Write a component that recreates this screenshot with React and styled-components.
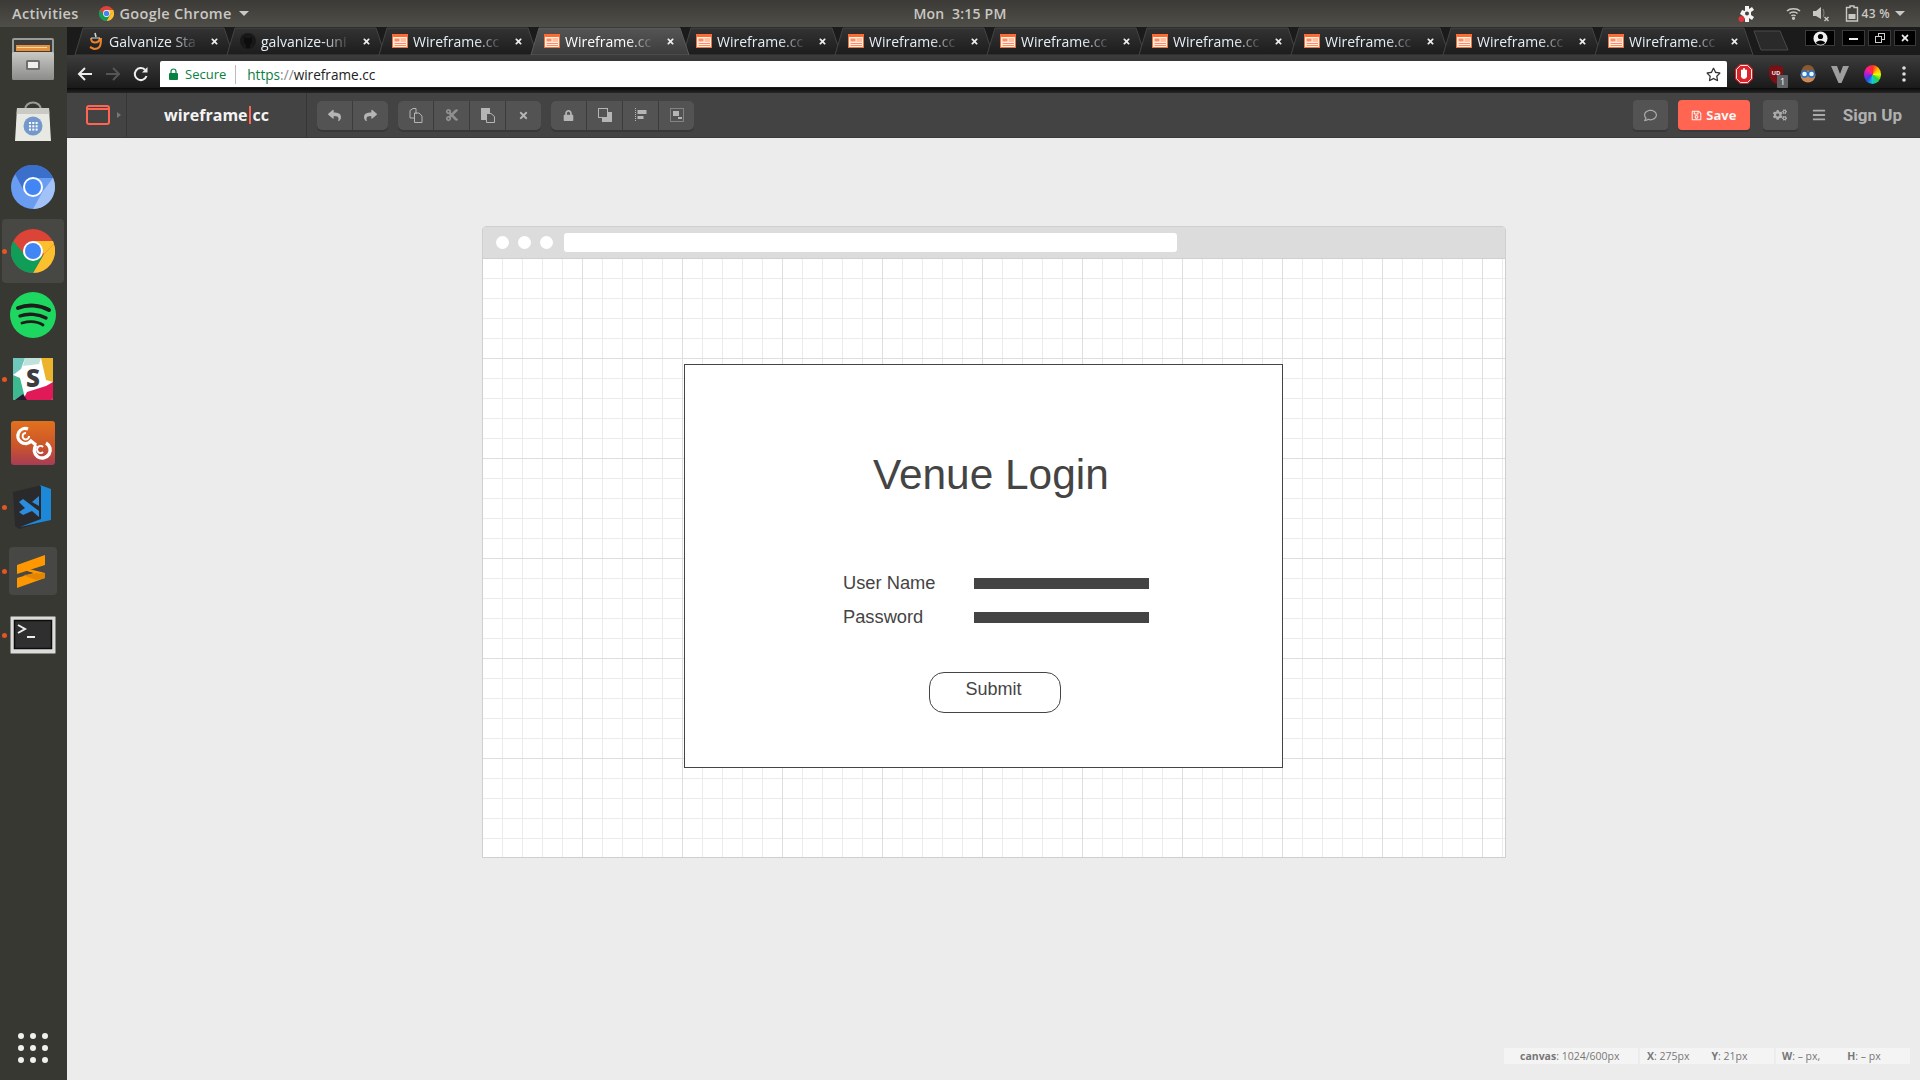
import React from 'react';
import styled, { createGlobalStyle } from 'styled-components';
import { FaReply, FaShare, FaTimes, FaLock, FaRegComment, FaCogs, FaBars, FaRegSave, FaRegStar, FaCut } from 'react-icons/fa';

const GlobalStyle = createGlobalStyle`
  html, body { margin: 0; padding: 0; height: 100%; overflow: hidden; background: #ececec; }
  #root { height: 1080px; }
  * { box-sizing: border-box; }
`;

const Screen = styled.div`
  width: 1920px;
  height: 1080px;
  display: flex;
  flex-direction: column;
  font-family: 'Open Sans', 'Liberation Sans', sans-serif;
  overflow: hidden;
`;

/* gnome top bar */
const TopBar = styled.div`
  height: 27px;
  flex: none;
  display: grid;
  grid-template-columns: 1fr auto 1fr;
  align-items: center;
  background: linear-gradient(#3c3a36, #504e48);
  color: #c9c8c4;
  font-size: 14.5px;
  font-weight: 600;
  letter-spacing: 0.3px;
`;
const TopLeft = styled.div`
  display: flex;
  align-items: center;
  padding-left: 12px;
`;
const AppMenu = styled.div`
  display: flex;
  align-items: center;
  gap: 6px;
  margin-left: 20px;
`;
const Clock = styled.div`
  font-size: 14px;
  letter-spacing: 0.2px;
`;
const Caret = styled.span`
  width: 0;
  height: 0;
  border-left: 5px solid transparent;
  border-right: 5px solid transparent;
  border-top: 5px solid #c9c8c4;
  margin-left: 1px;
`;
const Tray = styled.div`
  display: flex;
  align-items: center;
  justify-content: flex-end;
  padding-right: 15px;
  font-size: 12px;
`;
const TrayItem = styled.div`
  display: flex;
  align-items: center;
  margin-left: ${p => p.$gap}px;
  gap: ${p => p.$inner || 0}px;
`;

const Body = styled.div`
  flex: 1;
  display: flex;
  min-height: 0;
`;

/* launcher */
const Dock = styled.div`
  width: 67px;
  flex: none;
  background: #383833;
  display: flex;
  flex-direction: column;
  align-items: center;
`;
const DockSlot = styled.div`
  position: relative;
  width: 62px;
  height: 64px;
  margin-right: 1px;
  display: flex;
  align-items: center;
  justify-content: center;
  flex: none;
  border-radius: 4px;
  background: ${p => (p.$active ? '#474743' : 'transparent')};
`;
const RunDot = styled.span`
  position: absolute;
  left: 0;
  top: 30px;
  width: 5px;
  height: 5px;
  border-radius: 50%;
  background: #e95420;
`;
const AppGrid = styled.div`
  margin-top: auto;
  margin-bottom: 17px;
  margin-right: 1px;
  display: grid;
  grid-template-columns: repeat(3, 6px);
  gap: 6px;
  span {
    width: 6px;
    height: 6px;
    border-radius: 50%;
    background: #f0f0ee;
  }
`;

const Main = styled.div`
  flex: 1;
  display: flex;
  flex-direction: column;
  min-width: 0;
`;

/* chrome tabs */
const TabStrip = styled.div`
  height: 28px;
  flex: none;
  display: flex;
  align-items: stretch;
  padding-left: 1px;
  background: #1b1b1b;
  position: relative;
`;
const Tab = styled.div`
  position: relative;
  width: 152px;
  flex: none;
  display: flex;
  align-items: center;
  padding-left: 20px;
  color: ${p => (p.$active ? '#fff' : '#e6eef5')};
  font-size: 14px;
  z-index: ${p => (p.$active ? 2 : 1)};
`;
const TabShape = styled.svg`
  position: absolute;
  left: 0;
  top: 0;
  width: 166px;
  height: 28px;
  z-index: -1;
`;
const TabTitle = styled.span`
  width: 90px;
  margin-left: 5px;
  white-space: nowrap;
  -webkit-mask-image: linear-gradient(to right, #000 62px, transparent 90px);
  mask-image: linear-gradient(to right, #000 62px, transparent 90px);
`;
const TabClose = styled(FaTimes)`
  color: #eee;
  width: 9px;
  height: 9px;
  margin-left: 11px;
  flex: none;
`;
const NewTab = styled.svg`
  width: 36px;
  height: 24px;
  margin-left: 13px;
  margin-top: 2px;
  flex: none;
`;
const WindowButtons = styled.div`
  margin-left: auto;
  display: flex;
  align-items: flex-start;
  gap: 3px;
  padding: 3px 4px 0 0;
`;
const WinButton = styled.div`
  width: ${p => p.$w}px;
  height: 16px;
  margin-right: ${p => p.$after || 0}px;
  background: #000;
  border: 1px solid #3a3a3a;
  display: flex;
  align-items: center;
  justify-content: center;
`;

const ChromeBar = styled.div`
  height: 33px;
  flex: none;
  display: flex;
  align-items: center;
  background: linear-gradient(#3c3c3c, #1a1a1a);
  padding-top: 5px;
`;
const NavIcons = styled.div`
  width: 93px;
  flex: none;
  display: flex;
  align-items: center;
  padding-left: 10px;
  gap: 12px;
`;
const UrlBar = styled.div`
  width: 1567px;
  height: 26px;
  flex: none;
  background: #fff;
  border-radius: 2px 2px 0 0;
  display: flex;
  align-items: center;
  padding-left: 9px;
  font-size: 13.6px;
  color: #222;
`;
const Secure = styled.span`
  color: #0b8043;
  margin-left: 7px;
  padding-right: 9px;
  border-right: 1px solid #bbb;
  line-height: 19px;
  font-size: 13px;
`;
const UrlText = styled.span`
  margin-left: 11px;
  flex: 1;
  span { color: #0b8043; }
  i { font-style: normal; color: #888; }
`;
const StarIcon = styled(FaRegStar)`
  width: 15px;
  height: 15px;
  color: #333;
  margin-right: 6px;
`;
const ExtIcons = styled.div`
  flex: 1;
  display: flex;
  align-items: center;
  padding-left: 1px;
`;
const ExtSlot = styled.div`
  position: relative;
  width: 32px;
  display: flex;
  justify-content: center;
`;
const ExtBadge = styled.span`
  position: absolute;
  right: 4px;
  top: 10px;
  width: 11px;
  height: 13px;
  border-radius: 1px;
  background: #5f6368;
  color: #fff;
  font-size: 9px;
  line-height: 13px;
  text-align: center;
`;
const ColorWheel = styled.span`
  width: 17px;
  height: 19px;
  border-radius: 50%;
  background: conic-gradient(#ff2a2a, #ffb300, #e6ff00, #27d13c, #12c9d6, #2b48e8, #a31fd6, #ff1f8f, #ff2a2a);
`;
const Gap = styled.div`
  height: 5px;
  flex: none;
  background: linear-gradient(#0a0a0a, #262626);
`;

/* wireframe.cc toolbar */
const AppBar = styled.div`
  height: 45px;
  flex: none;
  display: flex;
  align-items: center;
  background: #434343;
  border-bottom: 1px solid #3a3a3a;
`;
const LogoCell = styled.div`
  width: 60px;
  height: 100%;
  flex: none;
  display: flex;
  align-items: center;
  padding-left: 19px;
  border-right: 1px solid #363636;
`;
const BrandCell = styled.div`
  width: 180px;
  height: 100%;
  flex: none;
  display: flex;
  align-items: center;
  justify-content: center;
  border-right: 1px solid #363636;
  color: #f4f4f4;
  font-size: 16px;
  font-weight: 700;
  span {
    border-left: 2px solid #ff6550;
    margin-left: 1px;
    padding-left: 2px;
    line-height: 18px;
  }
`;
const Group = styled.div`
  display: flex;
  width: ${p => p.$w}px;
  margin-left: 10px;
  height: 29px;
  border-radius: 5px;
  background: #535353;
  box-shadow: 0 2px 0 #383838;
  overflow: hidden;
`;
const ToolButton = styled.div`
  flex: 1;
  display: flex;
  align-items: center;
  justify-content: center;
  color: #b5b5b5;
  &:not(:last-child) { border-right: 1px solid #3c3c3c; }
  svg { display: block; }
`;
const RightTools = styled.div`
  margin-left: auto;
  display: flex;
  align-items: center;
`;
const SquareButton = styled.div`
  width: 35px;
  height: 30px;
  border-radius: 4px;
  background: #535353;
  box-shadow: 0 2px 0 #383838;
  color: #aaa;
  display: flex;
  align-items: center;
  justify-content: center;
`;
const SaveButton = styled.div`
  width: 72px;
  height: 30px;
  margin: 0 13px 0 10px;
  border-radius: 4px;
  background: #ff6550;
  box-shadow: 0 2px 0 #3a3a3a;
  color: #f6f6f6;
  font-size: 13px;
  font-weight: 700;
  display: flex;
  align-items: center;
  justify-content: center;
  gap: 4px;
`;
const SignUp = styled.div`
  margin: 0 18px 0 17px;
  color: #b0b0b0;
  font-family: Roboto, 'Open Sans', sans-serif;
  font-size: 17px;
  font-weight: 700;
`;
const Hamburger = styled(FaBars)`
  width: 14px;
  height: 14px;
  color: #aaa;
  margin-left: 14px;
`;

/* drawing area */
const Workspace = styled.div`
  flex: 1;
  display: flex;
  flex-direction: column;
  padding-top: 88px;
  background: #ececec;
  min-height: 0;
`;
const BrowserFrame = styled.div`
  width: 1024px;
  height: 632px;
  margin-left: 415px;
  flex: none;
  border: 1px solid #cfcfcf;
  border-radius: 4px 4px 0 0;
  display: flex;
  flex-direction: column;
  background: #fff;
`;
const FrameBar = styled.div`
  height: 32px;
  flex: none;
  display: flex;
  align-items: center;
  gap: 9px;
  padding-left: 13px;
  background: #dcdcdc;
  border-bottom: 1px solid #cfcfcf;
`;
const FrameDot = styled.span`
  width: 13px;
  height: 13px;
  border-radius: 50%;
  background: #fff;
`;
const FrameUrl = styled.span`
  width: 613px;
  height: 19px;
  margin-left: 2px;
  border-radius: 3px;
  background: #fff;
`;
const Canvas = styled.div`
  position: relative;
  flex: 1;
  background-color: #fff;
  background-image:
    linear-gradient(to right, #dedede 1px, transparent 1px),
    linear-gradient(to bottom, #dedede 1px, transparent 1px),
    linear-gradient(to right, #ebebeb 1px, transparent 1px),
    linear-gradient(to bottom, #ebebeb 1px, transparent 1px);
  background-size: 100px 100px, 100px 100px, 20px 20px, 20px 20px;
  background-position: 99px 99px, 99px 99px, 19px 19px, 19px 19px;
`;
const LoginBox = styled.div`
  position: absolute;
  left: 201px;
  top: 105px;
  width: 599px;
  height: 404px;
  background: #fff;
  border: 1px solid #444;
`;
const Shape = styled.div`
  position: absolute;
  left: ${p => p.$x}px;
  top: ${p => p.$y}px;
  color: #444;
  font-family: 'Liberation Sans', Arial, sans-serif;
  white-space: nowrap;
`;
const Heading = styled(Shape)`
  font-size: 42.4px;
  line-height: 48px;
`;
const FieldLabel = styled(Shape)`
  font-size: 18.3px;
  line-height: 22px;
`;
const FieldBar = styled(Shape)`
  width: 175px;
  height: 11px;
  background: #444;
`;
const SubmitButton = styled(Shape)`
  width: 132px;
  height: 41px;
  border: 1px solid #444;
  border-radius: 15px;
  background: #fff;
  font-size: 18px;
  line-height: 32px;
  text-align: center;
  padding-right: 3px;
`;

const StatusBar = styled.div`
  margin-top: auto;
  margin-bottom: 16px;
  align-self: flex-end;
  margin-right: 10px;
  display: flex;
  gap: 2px;
  font-size: 10.5px;
  color: #777;
  b { font-weight: 700; }
`;
const StatusCell = styled.div`
  width: ${p => p.$w}px;
  height: 16px;
  background: #f4f4f4;
  display: flex;
  align-items: center;
  padding-left: ${p => p.$pad}px;
  span { white-space: nowrap; }
  span + span { margin-left: ${p => p.$gap}px; }
`;

const ChromeLogo = ({ size = 44 }) => (
  <svg width={size} height={size} viewBox="0 0 44 44">
    <circle cx="22" cy="22" r="22" fill="#db4437" />
    <path d="M22 44 L33 25 L43 15 A22 22 0 0 1 22 44Z" fill="#fbc02d" />
    <path d="M2.2 12 A22 22 0 0 0 22 44 L32 26.5 L14 26Z" fill="#0f9d58" />
    <path d="M22 12 H42 A22 22 0 0 1 43 15 L33 25 Z" fill="#fbc02d" />
    <circle cx="22" cy="22" r="10" fill="#fff" />
    <circle cx="22" cy="22" r="8" fill="#4285f4" />
  </svg>
);

const ChromiumLogo = () => (
  <svg width="44" height="44" viewBox="0 0 44 44">
    <circle cx="22" cy="22" r="22" fill="#699df2" />
    <path d="M4 9 A22 22 0 0 1 42 13 L22 13 L12 24Z" fill="#3a6fcc" />
    <path d="M42 13 A22 22 0 0 1 22 44 L32 26Z" fill="#a3c2f7" />
    <circle cx="22" cy="22" r="10" fill="#fff" />
    <circle cx="22" cy="22" r="8" fill="#4285f4" />
  </svg>
);

const CabinetIcon = () => (
  <svg width="44" height="44" viewBox="0 0 44 44">
    <defs>
      <linearGradient id="cabinetBody" x1="0" y1="0" x2="0" y2="1">
        <stop offset="0" stopColor="#c8c8c5" />
        <stop offset="1" stopColor="#8c8c8a" />
      </linearGradient>
    </defs>
    <rect x="1" y="1" width="42" height="42" rx="2" fill="#9a9a97" />
    <rect x="3" y="3" width="38" height="12" fill="#3c3c3a" />
    <rect x="5" y="8" width="34" height="6" fill="#e8903c" />
    <rect x="6" y="10" width="30" height="1" fill="#f5d9a8" />
    <rect x="1" y="15" width="42" height="28" rx="2" fill="url(#cabinetBody)" />
    <rect x="15" y="23" width="14" height="10" rx="1.5" fill="#6e6e6c" />
    <rect x="17" y="25" width="10" height="6" fill="#eee" />
  </svg>
);

const StoreIcon = () => (
  <svg width="44" height="44" viewBox="0 0 44 44">
    <path d="M14 9 C14 -1 30 -1 30 9" fill="none" stroke="#9a9a96" strokeWidth="2" />
    <path d="M6 7 H38 L40 40 H4Z" fill="#e8e9e3" />
    <path d="M6 7 H38 L38.4 13 H5.6Z" fill="#c9cac4" />
    <circle cx="22" cy="25" r="9.5" fill="#7398cc" />
    <g fill="#fff">
      {[18, 21.3, 24.6].map(x => [21, 24.3, 27.6].map(y => <rect key={`${x}${y}`} x={x} y={y} width="2" height="2" />))}
    </g>
  </svg>
);

const SpotifyIcon = () => (
  <svg width="46" height="46" viewBox="0 0 46 46">
    <circle cx="23" cy="23" r="23" fill="#1ed760" />
    <g fill="none" stroke="#1d1d1b" strokeLinecap="round">
      <path d="M8 16 C18 12 30 13 39 18" strokeWidth="4" />
      <path d="M10 24 C18 21 29 22 36 26" strokeWidth="3.4" />
      <path d="M12 31 C19 29 27 29 33 33" strokeWidth="2.8" />
    </g>
  </svg>
);

const SlackIcon = () => (
  <svg width="40" height="42" viewBox="0 0 40 42">
    <rect width="40" height="42" rx="2" fill="#fff" />
    <path d="M0 0 H12 L8 11 L0 17Z" fill="#6fc8bb" />
    <path d="M12 0 H28 L26 6 L10 8Z" fill="#bfe3da" />
    <path d="M28 0 H40 V24 L33 22Z" fill="#ecb32d" />
    <path d="M0 17 L7 20 L12 40 V42 H2 Q0 42 0 40Z" fill="#3eb890" />
    <path d="M10 42 L14 34 L33 28 L40 24 V40 Q40 42 38 42Z" fill="#e01a59" />
    <path d="M2 42 L10 36 L14 42Z" fill="#2a1a2e" />
    <text x="20" y="29" textAnchor="middle" fontFamily="Open Sans, sans-serif" fontWeight="800" fontSize="24" fill="#3d3d3f">S</text>
  </svg>
);

const LoopIcon = () => (
  <svg width="46" height="46" viewBox="0 0 46 46">
    <defs>
      <linearGradient id="loopBg" x1="0" y1="0" x2="0" y2="1">
        <stop offset="0" stopColor="#e2711d" />
        <stop offset="0.6" stopColor="#c9532c" />
        <stop offset="1" stopColor="#a83c56" />
      </linearGradient>
    </defs>
    <rect x="1" y="1" width="44" height="44" rx="3" fill="url(#loopBg)" />
    <g fill="none" stroke="#fff">
      <path d="M18 9 A7.5 7.5 0 1 0 21 21 L26 25" strokeWidth="3.4" />
      <path d="M16 13 A3.2 3.2 0 1 0 19 16" strokeWidth="2" />
      <path d="M26 25 A8 8 0 1 0 36 23" strokeWidth="3.4" />
      <path d="M33 27 A3.5 3.5 0 1 0 33 32" strokeWidth="2" />
    </g>
  </svg>
);

const CodeIcon = () => (
  <svg width="42" height="46" viewBox="0 0 42 46">
    <path d="M1 8 L30 1 L38 6 V36 L7 45 L3 42Z" fill="#2a2a2c" />
    <path d="M28 1 L39 5 V36 L8 43 L29 35 V3Z" fill="#1e88d8" />
    <path d="M7 18 L11 15 L27 27 V33 L20 27 L11 31 L7 28 L13 24Z M27 12 V22 L20 18Z" fill="#2a8ddf" />
  </svg>
);

const SublimeIcon = () => (
  <svg width="48" height="48" viewBox="0 0 48 48">
    <rect width="48" height="48" rx="4" fill="#474745" />
    <path d="M8 18 L36 8 V18 L8 27Z" fill="#ff9800" />
    <path d="M8 21 L36 29 V31 L8 41 V31 L28 25Z" fill="#ff9800" />
    <path d="M8 21 L8 19 L36 26 V29Z" fill="#ff9800" />
    <path d="M36 26 V31 L27 33 L14 28Z" fill="#e08600" />
  </svg>
);

const TerminalIcon = () => (
  <svg width="46" height="38" viewBox="0 0 46 38">
    <rect x="0.5" y="0.5" width="45" height="37" rx="1" fill="#dcdcda" stroke="#8a8a88" />
    <rect x="4.5" y="4.5" width="37" height="28" fill="#2f2f2f" stroke="#0c0c0c" strokeWidth="1.5" />
    <path d="M8 9 L15 13 L8 17" fill="none" stroke="#eee" strokeWidth="2" />
    <rect x="17" y="20" width="8" height="2" fill="#eee" />
  </svg>
);

const WireframeFavicon = () => (
  <svg width="16" height="14" viewBox="0 0 16 14" style={{ flex: 'none' }}>
    <rect width="16" height="14" fill="#ff6a30" />
    <rect x="1" y="3" width="14" height="10" fill="#fff3e8" />
    <rect x="2.5" y="4.5" width="5" height="3" fill="#ff8a65" />
    <rect x="8.5" y="4.5" width="5.5" height="1" fill="#ff8a65" />
    <rect x="8.5" y="6.5" width="5.5" height="1" fill="#ff8a65" />
    <rect x="2.5" y="9" width="11.5" height="1" fill="#ff8a65" />
    <rect x="2.5" y="11" width="11.5" height="1" fill="#ff8a65" />
  </svg>
);

const GalvanizeFavicon = () => (
  <svg width="16" height="18" viewBox="0 0 16 18" style={{ flex: 'none' }}>
    <path d="M3 6 C3 12 11 12 12 6 M13 6 C13 14 12 17 6 17 L2 15" fill="none" stroke="#e8842c" strokeWidth="2" />
    <path d="M7 1 L8 5" stroke="#d8d8d8" strokeWidth="1.5" />
    <path d="M3 6 H12" stroke="#d8d8d8" strokeWidth="1" />
  </svg>
);

const GithubFavicon = () => (
  <svg width="16" height="16" viewBox="0 0 16 16" style={{ flex: 'none' }}>
    <circle cx="8" cy="8" r="8" fill="#181818" />
    <path d="M4 4 L6 5 H10 L12 4 V9 Q12 11 10 11.5 V15 H6 V11.5 Q4 11 4 9Z" fill="#0d0d0d" />
  </svg>
);

const TabOutline = ({ active }) => (
  <TabShape viewBox="0 0 166 28">
    <defs>
      <linearGradient id={active ? 'tabOn' : 'tabOff'} x1="0" y1="0" x2="0" y2="1">
        <stop offset="0" stopColor={active ? '#555' : '#333'} />
        <stop offset="1" stopColor={active ? '#3c3c3c' : '#1c1c1c'} />
      </linearGradient>
    </defs>
    <path
      d="M7 28 L15 1 H156 L165 28 Z"
      fill={`url(#${active ? 'tabOn' : 'tabOff'})`}
      stroke={active ? '#5a5a5a' : '#444'}
      strokeWidth="1"
    />
  </TabShape>
);

const CopyGlyph = () => (
  <svg width="14" height="15" viewBox="0 0 14 15" fill="none" stroke="currentColor" strokeWidth="1">
    <path d="M1 2.5 L4 0.5 H7 V6" />
    <path d="M1 2.5 V10 H5" />
    <path d="M5.5 5 H10 L13 8 V14.5 H5.5Z" />
  </svg>
);
const PasteGlyph = () => (
  <svg width="14" height="15" viewBox="0 0 14 15">
    <rect x="0" y="0" width="9" height="12" fill="currentColor" />
    <path d="M5.5 5.5 H10 L13.5 8.5 V14.5 H5.5Z" fill="#535353" stroke="currentColor" />
  </svg>
);
const ArrangeGlyph = () => (
  <svg width="14" height="14" viewBox="0 0 14 14">
    <rect x="4" y="4" width="10" height="10" fill="currentColor" />
    <rect x="0.5" y="0.5" width="9" height="9" fill="#535353" stroke="currentColor" />
  </svg>
);
const AlignGlyph = () => (
  <svg width="12" height="14" viewBox="0 0 12 14" fill="currentColor">
    <path d="M0.5 0 V14" stroke="currentColor" strokeDasharray="1 1" />
    <rect x="2.5" y="2" width="9" height="4" />
    <rect x="2.5" y="8" width="6" height="3" />
  </svg>
);
const GroupGlyph = () => (
  <svg width="14" height="14" viewBox="0 0 14 14" fill="currentColor">
    <rect x="0.5" y="0.5" width="13" height="13" fill="none" stroke="currentColor" strokeDasharray="1 1" />
    <rect x="3" y="3" width="6" height="5" />
    <rect x="8" y="9" width="4" height="2" />
  </svg>
);

const tabs = [
  { title: 'Galvanize Sta', icon: <GalvanizeFavicon /> },
  { title: 'galvanize-uni', icon: <GithubFavicon /> },
  { title: 'Wireframe.cc', icon: <WireframeFavicon /> },
  { title: 'Wireframe.cc', icon: <WireframeFavicon />, active: true },
  { title: 'Wireframe.cc', icon: <WireframeFavicon /> },
  { title: 'Wireframe.cc', icon: <WireframeFavicon /> },
  { title: 'Wireframe.cc', icon: <WireframeFavicon /> },
  { title: 'Wireframe.cc', icon: <WireframeFavicon /> },
  { title: 'Wireframe.cc', icon: <WireframeFavicon /> },
  { title: 'Wireframe.cc', icon: <WireframeFavicon /> },
  { title: 'Wireframe.cc', icon: <WireframeFavicon /> },
];

const dockItems = [
  { icon: <CabinetIcon /> },
  { icon: <StoreIcon /> },
  { icon: <ChromiumLogo /> },
  { icon: <ChromeLogo />, active: true, running: true },
  { icon: <SpotifyIcon /> },
  { icon: <SlackIcon />, running: true },
  { icon: <LoopIcon /> },
  { icon: <CodeIcon />, running: true },
  { icon: <SublimeIcon />, running: true },
  { icon: <TerminalIcon />, running: true },
];

export default function App() {
  return (
    <Screen>
      <GlobalStyle />
      <TopBar>
        <TopLeft>
          Activities
          <AppMenu>
            <ChromeLogo size={15} />
            Google Chrome
            <Caret />
          </AppMenu>
        </TopLeft>
        <Clock>Mon&nbsp;&nbsp;3:15 PM</Clock>
        <Tray>
          <TrayItem>
            <svg width="18" height="18" viewBox="0 0 18 18">
              <path d="M7 1 H11 V4 L14 2 L16 5 L13 7 V10 L16 12 L14 15 L11 13 V17 H7 V14 L5 11 L2 9 L4 5 L7 6Z" fill="#f4f4f4" />
              <circle cx="9" cy="8.5" r="2" fill="#45433e" />
              <circle cx="3.5" cy="14" r="3" fill="#e0353b" />
            </svg>
          </TrayItem>
          <TrayItem $gap={30}>
            <svg width="15" height="13" viewBox="0 0 15 13" fill="none" stroke="#c9c8c4" strokeWidth="1.6">
              <path d="M1 4 C4 1 11 1 14 4" />
              <path d="M3.5 6.5 C5.5 4.5 9.5 4.5 11.5 6.5" />
              <path d="M5.5 9 C6.5 8 8.5 8 9.5 9" />
              <circle cx="7.5" cy="11.3" r="0.8" fill="#c9c8c4" />
            </svg>
          </TrayItem>
          <TrayItem $gap={12}>
            <svg width="17" height="16" viewBox="0 0 17 16" fill="#c9c8c4">
              <path d="M0 5 H3 L8 1 V13 L3 10 H0Z" />
              <path d="M10 3 Q12 7 10 11" fill="none" stroke="#77756f" strokeWidth="1.2" />
              <path d="M11.5 11 L15.5 15 M15.5 11 L11.5 15" stroke="#c9c8c4" strokeWidth="1.4" />
            </svg>
          </TrayItem>
          <TrayItem $gap={15} $inner={3}>
            <svg width="14" height="17" viewBox="0 0 14 17" fill="none" stroke="#c9c8c4" strokeWidth="1.4">
              <path d="M5 1 H9 V2.5 H12.5 V16 H1.5 V2.5 H5Z" />
              <rect x="3.5" y="9" width="7" height="5" fill="#c9c8c4" stroke="none" />
            </svg>
            43 %
          </TrayItem>
          <TrayItem $gap={4}><Caret /></TrayItem>
        </Tray>
      </TopBar>
      <Body>
        <Dock>
          {dockItems.map((item, i) => (
            <DockSlot key={i} $active={item.active}>
              {item.running && <RunDot />}
              {item.icon}
            </DockSlot>
          ))}
          <AppGrid>
            {Array.from({ length: 9 }).map((_, i) => <span key={i} />)}
          </AppGrid>
        </Dock>
        <Main>
          <TabStrip>
            {tabs.map((tab, i) => (
              <Tab key={i} $active={tab.active}>
                <TabOutline active={tab.active} />
                {tab.icon}
                <TabTitle>{tab.title}</TabTitle>
                <TabClose />
              </Tab>
            ))}
            <NewTab viewBox="0 0 36 24">
              <path d="M1 2 H27 L35 21 H8 Z" fill="#2a2a2a" stroke="#4a4a4a" />
            </NewTab>
            <WindowButtons>
              <WinButton $w={30} $after={4}>
                <svg width="15" height="15" viewBox="0 0 15 15">
                  <circle cx="7.5" cy="7.5" r="7" fill="#eee" />
                  <circle cx="7.5" cy="5.5" r="2.6" fill="#000" />
                  <path d="M2.8 12 C4 8.5 11 8.5 12.2 12 A7 7 0 0 1 2.8 12Z" fill="#000" />
                </svg>
              </WinButton>
              <WinButton $w={23}>
                <svg width="9" height="3" viewBox="0 0 9 3"><rect width="9" height="2" y="1" fill="#eee" /></svg>
              </WinButton>
              <WinButton $w={23}>
                <svg width="10" height="10" viewBox="0 0 10 10" fill="none" stroke="#ccc">
                  <rect x="3.5" y="0.5" width="6" height="6" />
                  <rect x="0.5" y="3.5" width="6" height="6" fill="#000" />
                </svg>
              </WinButton>
              <WinButton $w={22}><FaTimes size={10} color="#eee" /></WinButton>
            </WindowButtons>
          </TabStrip>
          <ChromeBar>
            <NavIcons>
              <svg width="16" height="16" viewBox="0 0 16 16" fill="none" stroke="#eee" strokeWidth="2"><path d="M15 8 H2 M8 2 L2 8 L8 14" /></svg>
              <svg width="16" height="16" viewBox="0 0 16 16" fill="none" stroke="#555" strokeWidth="2"><path d="M1 8 H14 M8 2 L14 8 L8 14" /></svg>
              <svg width="16" height="16" viewBox="0 0 16 16" fill="none" stroke="#eee" strokeWidth="2">
                <path d="M13.5 10 A6 6 0 1 1 12 3.8" />
                <path d="M14.5 1 V6.5 H9" fill="#eee" stroke="none" />
              </svg>
            </NavIcons>
            <UrlBar>
              <svg width="9" height="12" viewBox="0 0 9 12">
                <path d="M2 5 V3.5 A2.5 2.5 0 0 1 7 3.5 V5" fill="none" stroke="#0b8043" strokeWidth="1.2" />
                <rect y="5" width="9" height="7" rx="1" fill="#0b8043" />
              </svg>
              <Secure>Secure</Secure>
              <UrlText><span>https</span><i>://</i>wireframe.cc</UrlText>
              <StarIcon />
            </UrlBar>
            <ExtIcons>
              <ExtSlot>
                <svg width="18" height="20" viewBox="0 0 18 20">
                  <path d="M5 0 H13 L18 5 V15 L13 20 H5 L0 15 V5Z" fill="#d9262c" />
                  <path d="M5.5 1.5 H12.5 L16.5 5.5 V14.5 L12.5 18.5 H5.5 L1.5 14.5 V5.5Z" fill="#d9262c" stroke="#fff" strokeWidth="0.9" />
                  <path d="M6 13 V6 Q7 5 8 6 V4.5 Q9 3.5 10 4.5 V6 Q11 5 12 6 V13 Q9 17 6 13Z" fill="#fff" />
                </svg>
              </ExtSlot>
              <ExtSlot>
                <svg width="16" height="19" viewBox="0 0 16 19">
                  <path d="M1 2 L8 0 L15 2 V10 Q14 16 8 19 Q2 16 1 10Z" fill="#7a0f14" />
                  <text x="8" y="10" textAnchor="middle" fontSize="6" fontWeight="700" fontFamily="Open Sans, sans-serif" fill="#eee">UD</text>
                </svg>
                <ExtBadge>1</ExtBadge>
              </ExtSlot>
              <ExtSlot>
                <svg width="18" height="20" viewBox="0 0 18 20">
                  <circle cx="9" cy="11" r="7.5" fill="#c98a5a" />
                  <path d="M2 9 Q3 1 9 1 Q15 1 16 9 Q9 4 2 9Z" fill="#8a5a2e" />
                  <circle cx="5.5" cy="10" r="3" fill="#dff" stroke="#2a6fd0" strokeWidth="1.4" />
                  <circle cx="12.5" cy="10" r="3" fill="#dff" stroke="#2a6fd0" strokeWidth="1.4" />
                </svg>
              </ExtSlot>
              <ExtSlot>
                <svg width="18" height="17" viewBox="0 0 18 17">
                  <path d="M0 0 H6 L9 8 L12 0 H18 L10.5 17 H7.5Z" fill="#9e9e9e" />
                </svg>
              </ExtSlot>
              <ExtSlot><ColorWheel /></ExtSlot>
              <ExtSlot>
                <svg width="4" height="16" viewBox="0 0 4 16" fill="#ddd">
                  <circle cx="2" cy="2" r="1.8" /><circle cx="2" cy="8" r="1.8" /><circle cx="2" cy="14" r="1.8" />
                </svg>
              </ExtSlot>
            </ExtIcons>
          </ChromeBar>
          <Gap />
          <AppBar>
            <LogoCell>
              <svg width="36" height="20" viewBox="0 0 36 20">
                <rect x="1" y="1" width="22" height="18" rx="2" fill="none" stroke="#ff6550" strokeWidth="2" />
                <rect x="1" y="3" width="22" height="2" fill="#ff6550" />
                <path d="M31 7 L35 10 L31 13Z" fill="#777" />
              </svg>
            </LogoCell>
            <BrandCell>wireframe<span>cc</span></BrandCell>
            <Group $w={71}>
              <ToolButton><FaReply size={13} /></ToolButton>
              <ToolButton><FaShare size={13} /></ToolButton>
            </Group>
            <Group $w={143}>
              <ToolButton><CopyGlyph /></ToolButton>
              <ToolButton><FaCut size={14} color="#8f8f8f" /></ToolButton>
              <ToolButton><PasteGlyph /></ToolButton>
              <ToolButton><FaTimes size={11} /></ToolButton>
            </Group>
            <Group $w={143}>
              <ToolButton><FaLock size={11} /></ToolButton>
              <ToolButton><ArrangeGlyph /></ToolButton>
              <ToolButton><AlignGlyph /></ToolButton>
              <ToolButton><GroupGlyph /></ToolButton>
            </Group>
            <RightTools>
              <SquareButton><FaRegComment size={13} /></SquareButton>
              <SaveButton><FaRegSave size={11} />Save</SaveButton>
              <SquareButton><FaCogs size={14} /></SquareButton>
              <Hamburger />
              <SignUp>Sign Up</SignUp>
            </RightTools>
          </AppBar>
          <Workspace>
            <BrowserFrame>
              <FrameBar>
                <FrameDot />
                <FrameDot />
                <FrameDot />
                <FrameUrl />
              </FrameBar>
              <Canvas>
                <LoginBox>
                  <Heading $x={188} $y={86}>Venue Login</Heading>
                  <FieldLabel $x={158} $y={207}>User Name</FieldLabel>
                  <FieldBar $x={289} $y={213} />
                  <FieldLabel $x={158} $y={241}>Password</FieldLabel>
                  <FieldBar $x={289} $y={247} />
                  <SubmitButton $x={244} $y={307}>Submit</SubmitButton>
                </LoginBox>
              </Canvas>
            </BrowserFrame>
            <StatusBar>
              <StatusCell $w={134} $pad={16}><span><b>canvas</b>: 1024/600px</span></StatusCell>
              <StatusCell $w={134} $pad={7} $gap={22}><span><b>X</b>: 275px</span><span><b>Y</b>: 21px</span></StatusCell>
              <StatusCell $w={134} $pad={6} $gap={27}><span><b>W</b>: – px,</span><span><b>H</b>: – px</span></StatusCell>
            </StatusBar>
          </Workspace>
        </Main>
      </Body>
    </Screen>
  );
}
